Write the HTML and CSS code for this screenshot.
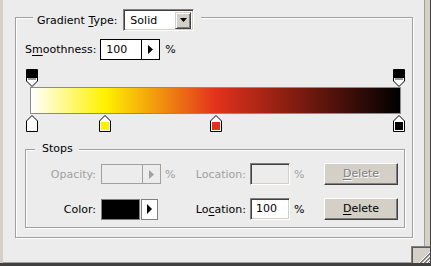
FILE: index.html
```html
<!DOCTYPE html>
<html>
<head>
<meta charset="utf-8">
<link rel="stylesheet" href="styles.css">
</head>
<body>
<div class="window">
  <div class="panel">
    <div class="group outer">
      <div class="legend">
        <span class="label">Gradient <u>T</u>ype:</span>
        <div class="select">
          <span class="select-text">Solid</span>
          <span class="select-btn"><svg width="7" height="4" viewBox="0 0 7 4"><path d="M0 0H7L3.5 4Z" fill="#000"/></svg></span>
        </div>
      </div>
      <div class="smooth">
        <span class="label">S<u>m</u>oothness:</span>
        <div class="spin">
          <span class="spin-val">100</span>
          <span class="spin-arrow"><svg width="5" height="9" viewBox="0 0 5 9"><path d="M0 0V9L5 4.5Z" fill="#000"/></svg></span>
        </div>
        <span class="pct">%</span>
      </div>
      <div class="editor">
        <div class="stops-row">
          <svg class="stop" style="left:0px" width="12" height="18" viewBox="0 0 12 18"><path d="M0.5 0.5H11.5V12L6 17.5L0.5 12Z" fill="#fff" stroke="#000"/><rect x="1" y="1" width="10" height="8" fill="#000"/><rect x="2" y="9" width="8" height="2" fill="#9a9a9a"/></svg>
          <svg class="stop" style="left:367px" width="12" height="18" viewBox="0 0 12 18"><path d="M0.5 0.5H11.5V12L6 17.5L0.5 12Z" fill="#fff" stroke="#000"/><rect x="1" y="1" width="10" height="8" fill="#000"/><rect x="2" y="9" width="8" height="2" fill="#9a9a9a"/></svg>
        </div>
        <div class="bar"></div>
        <div class="stops-row bottom">
          <svg class="stop" style="left:0px" width="12" height="17" viewBox="0 0 12 17"><path d="M6 0.5L11.5 6V16.5H0.5V6Z" fill="#fff" stroke="#000"/><rect x="2" y="7" width="8" height="8" fill="#fff"/></svg>
          <svg class="stop" style="left:73px" width="12" height="17" viewBox="0 0 12 17"><path d="M6 0.5L11.5 6V16.5H0.5V6Z" fill="#fff" stroke="#000"/><rect x="2" y="7" width="8" height="8" fill="#fff200"/></svg>
          <svg class="stop" style="left:184px" width="12" height="17" viewBox="0 0 12 17"><path d="M6 0.5L11.5 6V16.5H0.5V6Z" fill="#fff" stroke="#000"/><rect x="2" y="7" width="8" height="8" fill="#e3321c"/></svg>
          <svg class="stop" style="left:367px" width="12" height="17" viewBox="0 0 12 17"><path d="M6 0.5L11.5 6V16.5H0.5V6Z" fill="#fff" stroke="#000"/><rect x="2" y="7" width="8" height="8" fill="#000"/></svg>
        </div>
      </div>
      <div class="group stops">
        <div class="legend small"><span class="label">Stops</span></div>
        <div class="srow">
          <span class="lbl disabled">Opacity:</span>
          <span class="ctrl">
            <span class="spin off">
              <span class="spin-val"></span>
              <span class="spin-arrow"><svg width="5" height="9" viewBox="0 0 5 9"><path d="M0 0V9L5 4.5Z" fill="#a0a0a0"/></svg></span>
            </span>
          </span>
          <span class="pct1 disabled">%</span>
          <span class="lbl2 disabled">Location:</span>
          <span class="loc off"></span>
          <span class="pct2 disabled">%</span>
          <span class="btn off"><u>D</u>elete</span>
        </div>
        <div class="srow">
          <span class="lbl">Color:</span>
          <span class="ctrl">
            <span class="swatch"></span>
            <span class="swatch-arrow"><svg width="5" height="10" viewBox="0 0 5 10"><path d="M0 0V10L5 5Z" fill="#000"/></svg></span>
          </span>
          <span class="pct1"></span>
          <span class="lbl2">Lo<u>c</u>ation:</span>
          <span class="loc">100</span>
          <span class="pct2">%</span>
          <span class="btn"><u>D</u>elete</span>
        </div>
      </div>
    </div>
  </div>
  <div class="grip">
    <svg width="12" height="12" viewBox="0 0 12 12">
      <path d="M12 1L1 12M12 5L5 12M12 9L9 12" stroke="#fff" stroke-width="1"/>
      <path d="M12 2L2 12M12 6L6 12M12 10L10 12" stroke="#808080" stroke-width="1"/>
      <path d="M12 3L3 12M12 7L7 12" stroke="#808080" stroke-width="1"/>
    </svg>
  </div>
</div>
</body>
</html>
```
FILE: styles.css
```css
html, body {
  margin: 0;
  padding: 0;
}
body {
  font-family: "DejaVu Sans", "Liberation Sans", sans-serif;
  font-size: 11px;
  line-height: 13px;
  color: #000;
  background: #ececec;
}
u {
  text-decoration: underline;
  text-underline-offset: 2px;
}
.window {
  position: relative;
  width: 431px;
  height: 266px;
  box-sizing: border-box;
  background: #d4d0c8;
  border-right: 1px solid #404040;
  border-bottom: 3px solid #404040;
  display: flex;
}
.panel {
  flex: 1;
  margin-left: 3px;
  margin-right: 5px;
  background: #ececec;
  border-right: 1px solid #a0a0a0;
  border-bottom: 1px solid #a0a0a0;
  padding-top: 17px;
  padding-left: 12px;
}
.group {
  box-sizing: border-box;
  border: 1px solid #a0a0a0;
  box-shadow: inset 1px 1px 0 #fff, 1px 1px 0 #fff;
}
.group.outer {
  width: 398px;
  height: 221px;
}
.legend {
  display: flex;
  align-items: center;
  width: max-content;
  height: 22px;
  margin-top: -9px;
  margin-left: 17px;
  padding: 0 7px 0 4px;
  background: #ececec;
}
.select {
  margin-left: 6px;
  width: 71px;
  height: 22px;
  box-sizing: border-box;
  border: 1px solid;
  border-color: #808080 #fff #fff #808080;
  box-shadow: inset 1px 1px 0 #404040, inset -1px -1px 0 #d4d0c8;
  background: #fff;
  display: flex;
  align-items: center;
  padding: 1px 2px 1px 1px;
}
.select-text {
  flex: 1;
  padding-left: 5px;
  padding-top: 1px;
}
.select-btn {
  width: 16px;
  height: 17px;
  box-sizing: border-box;
  background: #d4d0c8;
  border: 1px solid;
  border-color: #d4d0c8 #404040 #404040 #d4d0c8;
  box-shadow: inset 1px 1px 0 #fff, inset -1px -1px 0 #808080;
  display: flex;
  align-items: center;
  justify-content: center;
}
.smooth {
  display: flex;
  align-items: center;
  height: 21px;
  margin-top: 8px;
  margin-left: 9px;
}
.spin {
  margin-left: 4px;
  width: 60px;
  height: 21px;
  box-sizing: border-box;
  border: 1px solid #000;
  background: #fff;
  display: flex;
}
.spin-val {
  width: 41px;
  box-sizing: border-box;
  border-right: 1px solid #000;
  padding-left: 5px;
  line-height: 19px;
}
.spin-arrow {
  flex: 1;
  display: flex;
  align-items: center;
  justify-content: center;
}
.spin.off {
  margin-left: 0;
  height: 20px;
  border-color: #a0a0a0;
  background: #ececec;
}
.spin.off .spin-val {
  border-right-color: #a0a0a0;
}
.pct {
  margin-left: 5px;
}
.editor {
  width: 379px;
  margin-top: 9px;
  margin-left: 10px;
}
.stops-row {
  position: relative;
  height: 18px;
}
.stops-row.bottom {
  height: 17px;
  margin-top: 1px;
}
.stop {
  position: absolute;
  top: 0;
  display: block;
}
.bar {
  margin: 0 4px;
  height: 27px;
  box-sizing: border-box;
  border: 1px solid #8a8a8a;
  background: linear-gradient(to right, #fff 0%, #fff200 20%, #e3321c 50%, #000 100%);
}
.group.stops {
  width: 380px;
  height: 79px;
  margin-top: 17px;
  margin-left: 9px;
}
.legend.small {
  height: 13px;
  margin-top: -8px;
  margin-left: 9px;
  padding: 0 6px 0 7px;
}
.srow {
  display: flex;
  align-items: center;
  height: 22px;
  margin-top: 8px;
}
.srow + .srow {
  margin-top: 13px;
}
.disabled {
  color: #a0a0a0;
}
.lbl {
  width: 75px;
  box-sizing: border-box;
  text-align: right;
  padding-right: 5px;
  padding-top: 1px;
}
.ctrl {
  width: 60px;
  display: flex;
  align-items: center;
}
.swatch {
  width: 39px;
  height: 21px;
  box-sizing: border-box;
  border: 1px solid #808080;
  background: #000;
}
.swatch-arrow {
  margin-left: 1px;
  width: 17px;
  height: 21px;
  box-sizing: border-box;
  border: 1px solid #808080;
  background: #fff;
  display: flex;
  align-items: center;
  justify-content: center;
}
.pct1 {
  width: 28px;
  box-sizing: border-box;
  padding-left: 4px;
  padding-top: 1px;
}
.lbl2 {
  width: 61px;
  box-sizing: border-box;
  text-align: right;
  padding-right: 4px;
  padding-top: 1px;
}
.loc {
  width: 40px;
  height: 22px;
  box-sizing: border-box;
  border: 1px solid;
  border-color: #808080 #fff #fff #808080;
  box-shadow: inset 1px 1px 0 #404040, inset -1px -1px 0 #d4d0c8;
  background: #fff;
  padding-left: 5px;
  line-height: 20px;
}
.loc.off {
  background: #ececec;
}
.pct2 {
  width: 34px;
  box-sizing: border-box;
  padding-left: 4px;
  padding-top: 1px;
}
.btn {
  width: 74px;
  height: 22px;
  box-sizing: border-box;
  background: #d4d0c8;
  border: 1px solid;
  border-color: #fff #404040 #404040 #fff;
  box-shadow: inset -1px -1px 0 #808080;
  text-align: center;
  line-height: 20px;
}
.btn.off {
  color: #808080;
  text-shadow: 1px 1px 0 #fff;
}
.grip {
  position: absolute;
  left: 411px;
  top: 246px;
  width: 19px;
  height: 17px;
  box-sizing: border-box;
  background: #d4d0c8;
  border-left: 1px solid #808080;
  border-top: 1px solid #808080;
  box-shadow: inset 1px 1px 0 #5a5a5a;
  display: flex;
  align-items: flex-end;
  justify-content: flex-end;
}
.grip svg {
  display: block;
}
```
